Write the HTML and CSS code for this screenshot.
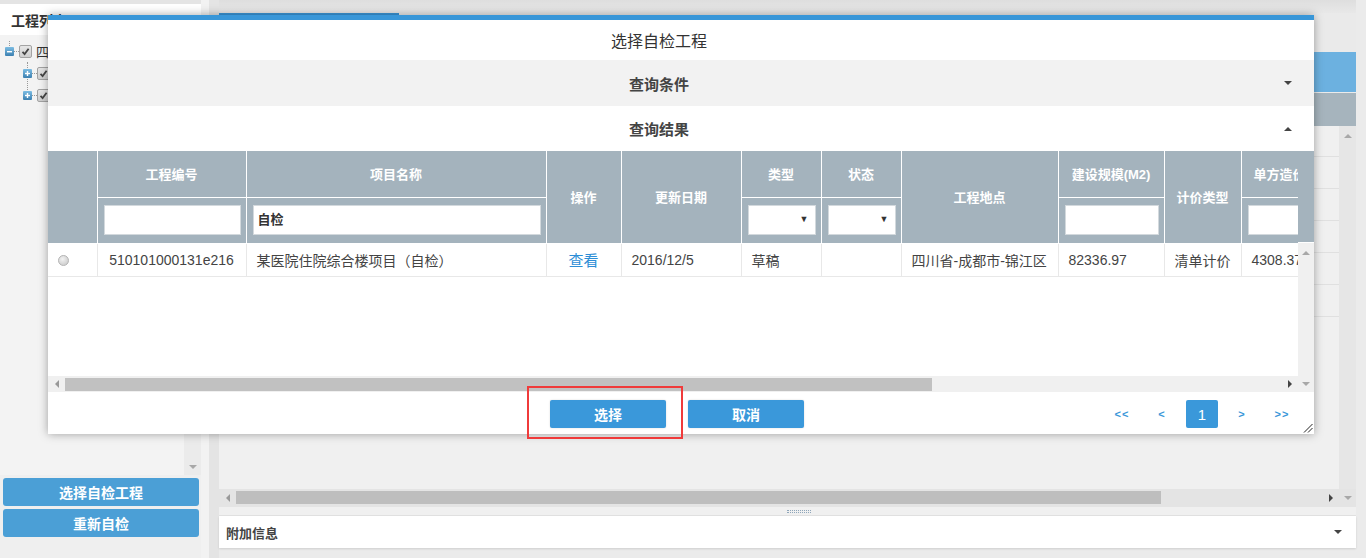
FILE: index.html
```html
<!DOCTYPE html>
<html lang="zh-CN">
<head>
<meta charset="utf-8">
<title>选择自检工程</title>
<link rel="stylesheet" href="styles.css">
</head>
<body>
<div class="page">
  <aside class="left">
    <div class="l-top"></div>
    <div class="l-head">工程列表</div>
    <div class="l-tree">
      <div class="tree">
        <div class="node root">
          <svg class="tog" width="9" height="9" viewBox="0 0 9 9"><defs><linearGradient id="tg" x1="0" y1="0" x2="0" y2="1"><stop offset="0" stop-color="#7dbde3"/><stop offset="1" stop-color="#3b7fb0"/></linearGradient></defs><rect width="9" height="9" rx="1" fill="url(#tg)"/><rect x="2" y="4" width="5" height="1.4" fill="#fff"/></svg>
          <span class="cb"><svg width="11" height="11" viewBox="0 0 11 11"><path d="M2.5 5.8 L4.6 8 L8.6 2.8" fill="none" stroke="#444" stroke-width="1.8"/></svg></span>
          <span class="nt">四川省成都市</span>
        </div>
        <div class="children">
          <div class="node">
            <svg class="tog" width="9" height="9" viewBox="0 0 9 9"><rect width="9" height="9" rx="1" fill="url(#tg)"/><rect x="2" y="3.8" width="5" height="1.4" fill="#fff"/><rect x="3.8" y="2" width="1.4" height="5" fill="#fff"/></svg>
            <span class="cb"><svg width="11" height="11" viewBox="0 0 11 11"><path d="M2.5 5.8 L4.6 8 L8.6 2.8" fill="none" stroke="#444" stroke-width="1.8"/></svg></span>
            <span class="nt">某医院住院综合楼</span>
          </div>
          <div class="node">
            <svg class="tog" width="9" height="9" viewBox="0 0 9 9"><rect width="9" height="9" rx="1" fill="url(#tg)"/><rect x="2" y="3.8" width="5" height="1.4" fill="#fff"/><rect x="3.8" y="2" width="1.4" height="5" fill="#fff"/></svg>
            <span class="cb"><svg width="11" height="11" viewBox="0 0 11 11"><path d="M2.5 5.8 L4.6 8 L8.6 2.8" fill="none" stroke="#444" stroke-width="1.8"/></svg></span>
            <span class="nt">某办公楼</span>
          </div>
        </div>
      </div>
      <div class="l-vs"><span class="tri-down grey"></span></div>
    </div>
    <div class="l-btns">
      <button class="lbtn">选择自检工程</button>
      <button class="lbtn">重新自检</button>
    </div>
  </aside>
  <div class="sep"></div>
  <main class="main">
    <div class="m-top"></div>
    <div class="m-tabs"><div class="m-tab"></div></div>
    <div class="m-toolbar"></div>
    <div class="m-thead"></div>
    <div class="m-body">
      <div class="m-rows">
        <div class="m-row"></div><div class="m-row"></div><div class="m-row"></div>
        <div class="m-row"></div><div class="m-row"></div><div class="m-row"></div>
      </div>
      <div class="m-vs"><span class="tri-up grey"></span></div>
    </div>
    <div class="m-hs">
      <div class="hs-btn"><span class="tri-left grey"></span></div>
      <div class="hs-track"><div class="hs-thumb"></div></div>
      <div class="hs-btn"><span class="tri-right"></span></div>
      <div class="hs-corner"><span class="tri-down grey"></span></div>
    </div>
    <div class="m-split"><span class="grip"></span></div>
    <div class="m-extra"><span>附加信息</span><span class="tri-down dark"></span></div>
  </main>
</div>

<div class="dialog">
  <div class="d-title">选择自检工程</div>
  <div class="d-sec cond">查询条件<span class="tri-down dark sec-arrow"></span></div>
  <div class="d-sec res">查询结果<span class="tri-up dark sec-arrow"></span></div>
  <div class="d-grid">
    <div class="g-main">
      <div class="g-view">
        <table class="grid">
          <colgroup>
            <col class="w49"><col class="w149"><col class="w300"><col class="w75"><col class="w120"><col class="w80"><col class="w80"><col class="w157"><col class="w106"><col class="w77"><col class="w120">
          </colgroup>
          <thead>
            <tr class="h1">
              <th rowspan="2" class="first"></th>
              <th>工程编号</th>
              <th>项目名称</th>
              <th rowspan="2">操作</th>
              <th rowspan="2">更新日期</th>
              <th>类型</th>
              <th>状态</th>
              <th rowspan="2">工程地点</th>
              <th>建设规模(M2)</th>
              <th rowspan="2">计价类型</th>
              <th>单方造价(元/M2)</th>
            </tr>
            <tr class="h2">
              <th><div class="fi"></div></th>
              <th><div class="fi">自检</div></th>
              <th><div class="fs"><span class="sel-arrow">▼</span></div></th>
              <th><div class="fs"><span class="sel-arrow">▼</span></div></th>
              <th><div class="fi"></div></th>
              <th><div class="fi"></div></th>
            </tr>
          </thead>
          <tbody>
            <tr class="row">
              <td class="first center"><span class="radio"></span></td>
              <td class="center">510101000131e216</td>
              <td>某医院住院综合楼项目（自检）</td>
              <td class="center"><span class="link">查看</span></td>
              <td>2016/12/5</td>
              <td>草稿</td>
              <td></td>
              <td>四川省-成都市-锦江区</td>
              <td>82336.97</td>
              <td>清单计价</td>
              <td>4308.37</td>
            </tr>
          </tbody>
        </table>
      </div>
      <div class="g-hs">
        <div class="ghs-btn"><span class="tri-left grey"></span></div>
        <div class="ghs-track"><div class="ghs-thumb"></div></div>
        <div class="ghs-btn"><span class="tri-right"></span></div>
      </div>
    </div>
    <div class="g-vs">
      <div class="g-vs-top"></div>
      <div class="g-vs-track">
        <span class="tri-up grey"></span>
        <span class="tri-down grey"></span>
      </div>
    </div>
  </div>
  <div class="d-foot">
    <div class="btns">
      <button class="dbtn">选择</button>
      <button class="dbtn">取消</button>
    </div>
    <div class="pager">
      <span class="pg">&lt;&lt;</span>
      <span class="pg">&lt;</span>
      <span class="pg cur">1</span>
      <span class="pg">&gt;</span>
      <span class="pg">&gt;&gt;</span>
    </div>
  </div>
  <svg class="resize" width="10" height="9" viewBox="0 0 10 9"><path d="M1 8.5 L9.5 0 M5 8.5 L9.5 4" stroke="#222" stroke-width="1"/></svg>
</div>
<div class="highlight"></div>
</body>
</html>
```

FILE: styles.css
```css
* { box-sizing: border-box; margin: 0; padding: 0; }
html, body { width: 1366px; height: 558px; overflow: hidden; }
body {
  position: relative;
  background: #ebebeb;
  font-family: "Liberation Sans", "Noto Sans CJK SC", sans-serif;
  font-size: 13px;
  color: #444;
}
button { font-family: "Liberation Sans", "Noto Sans CJK SC", sans-serif; cursor: pointer; }

/* triangles */
.tri-down, .tri-up, .tri-left, .tri-right { display: inline-block; width: 0; height: 0; }
.tri-down { border-left: 4px solid transparent; border-right: 4px solid transparent; border-top: 4px solid #555; }
.tri-up { border-left: 4px solid transparent; border-right: 4px solid transparent; border-bottom: 4px solid #555; }
.tri-left { border-top: 4px solid transparent; border-bottom: 4px solid transparent; border-right: 4px solid #999; }
.tri-right { border-top: 4px solid transparent; border-bottom: 4px solid transparent; border-left: 4px solid #444; }
.tri-down.grey { border-top-color: #a8a8a8; }
.tri-up.grey { border-bottom-color: #a8a8a8; }
.tri-down.dark { border-top-color: #444; }
.tri-up.dark { border-bottom-color: #444; }

.page { display: flex; height: 558px; }

/* left panel */
.left { width: 201px; display: flex; flex-direction: column; background: #efefef; }
.l-top { height: 4px; background: #e4e4e4; }
.l-head {
  height: 31px; background: #fff; padding: 3px 0 0 11px;
  font-size: 14px; font-weight: bold; line-height: 28px; color: #333;
}
.l-tree { height: 440px; display: flex; background: #f3f3f3; }
.tree { flex: 1; padding-top: 5px; }
.node { height: 22px; display: flex; align-items: center; position: relative; padding-left: 5px; }
.node .tog { flex: none; }
.node .cb {
  margin-left: 5px; width: 13px; height: 13px; flex: none;
  background: linear-gradient(#e6e6e6, #cfcfcf); border: 1px solid #a3a3a3; border-radius: 2px;
  display: flex; align-items: center; justify-content: center;
}
.node .nt { margin-left: 4px; font-size: 13px; color: #333; white-space: nowrap; }
.node::after {
  content: ""; position: absolute; left: 14px; top: 11px; width: 5px; border-top: 1px dotted #999;
}
.root::before {
  content: ""; position: absolute; left: 9px; top: 1px; height: 5px; border-left: 1px dotted #999;
}
.children { position: relative; padding-left: 18px; }
.children::before {
  content: ""; position: absolute; left: 27px; top: 0; height: 34px; border-left: 1px dotted #999;
}
.l-vs {
  width: 17px; background: #ebebeb; display: flex; flex-direction: column;
  justify-content: flex-end; align-items: center; padding-bottom: 6px;
}
.l-btns { padding: 3px 2px 0 3px; display: flex; flex-direction: column; gap: 3px; }
.lbtn {
  height: 28px; border: 0; border-radius: 3px; background: #4b9fd6;
  color: #fff; font-size: 14px; font-weight: bold;
}

.sep { width: 18px; background: linear-gradient(to right, #f2f2f2 0, #f2f2f2 8px, #e4e4e4 8px); }

/* main background area */
.main { width: 1137px; display: flex; flex-direction: column; }
.m-top { height: 13px; background: linear-gradient(#dedede, #e8e8e8); }
.m-tabs { height: 39px; background: #eaeaea; border-radius: 3px 3px 0 0; }
.m-tab { width: 180px; height: 39px; background: #fff; border-top: 2px solid #3a96d8; }
.m-toolbar { height: 40px; background: #6cb1e0; }
.m-thead { height: 33px; margin-top: 1px; background: #a6b4bd; }
.m-body { height: 363px; display: flex; background: #f0f0f0; }
.m-rows { flex: 1; }
.m-row { height: 32px; border-bottom: 1px solid #e0e0e0; }
.m-row:first-child { height: 31px; }
.m-vs { width: 17px; background: #e6e6e6; display: flex; justify-content: center; padding-top: 8px; }
.m-hs { height: 18px; display: flex; background: #e4e4e4; }
.hs-btn, .hs-corner { width: 17px; display: flex; align-items: center; justify-content: center; }
.hs-corner { background: #e4e4e4; }
.hs-track { flex: 1; padding-top: 2px; }
.hs-thumb { width: 925px; height: 13px; background: #bebebe; }
.m-split { height: 9px; background: #f0f0f0; display: flex; justify-content: center; align-items: center; border-bottom: 1px solid #e2e2e2; }
.grip { width: 24px; height: 3px; margin-left: 23px; border-top: 1px dotted #8fa6ba; border-bottom: 1px dotted #8fa6ba; }
.m-extra {
  height: 32px; background: #fff; width: 1137px;
  display: flex; align-items: center; justify-content: space-between;
  padding: 0 14px 0 7px; box-shadow: 0 1px 2px rgba(0,0,0,.12);
  font-size: 13px; font-weight: bold; color: #444;
}

/* dialog */
.dialog {
  position: absolute; left: 48px; top: 15px; width: 1266px; height: 419px;
  background: #fff; border-top: 5px solid #3896d8;
  box-shadow: 0 0 9px rgba(0,0,0,.35);
  display: flex; flex-direction: column;
}
.d-title {
  height: 40px; display: flex; align-items: center; justify-content: center;
  padding-right: 44px; font-size: 16px; color: #333;
}
.d-sec {
  height: 46px; position: relative; display: flex; align-items: center; justify-content: center;
  padding-right: 44px; font-size: 15px; font-weight: bold; color: #444;
}
.d-sec.cond { background: #f2f2f2; }
.d-sec.res { height: 45px; }
.sec-arrow { position: absolute; right: 22px; top: 21px; }
.d-grid { height: 241px; display: flex; }
.g-main { width: 1250px; display: flex; flex-direction: column; }
.g-view { height: 225px; overflow: hidden; background: #fff; }
.grid { table-layout: fixed; width: 1313px; border-collapse: collapse; }
.w49 { width: 49px; } .w149 { width: 149px; } .w300 { width: 300px; } .w75 { width: 75px; }
.w120 { width: 120px; } .w80 { width: 80px; } .w157 { width: 157px; } .w106 { width: 106px; } .w77 { width: 77px; }
.grid th {
  background: #a4b3bd; color: #fff; font-size: 13px; font-weight: bold;
  border-left: 1px solid #fff; border-bottom: 1px solid #fff;
  white-space: nowrap; overflow: hidden; text-align: center; padding: 0;
}
.grid th.first, .grid td.first { border-left: 0; }
.grid tr.h1 { height: 46px; }
.grid tr.h2 { height: 46px; }
.grid tr.h2 th { padding: 0 5px 0 6px; }
.fi {
  height: 30px; background: #fff; border: 1px solid #d3d9dd;
  color: #333; font-size: 13px; font-weight: bold; text-align: left;
  line-height: 28px; padding-left: 4px;
}
.fs {
  height: 30px; background: #fff; border: 1px solid #d3d9dd; position: relative;
}
.sel-arrow { position: absolute; right: 6px; top: 8px; font-size: 9px; color: #333; font-weight: normal; }
.grid td {
  height: 33px; padding: 0 10px; font-size: 14px; color: #444; white-space: nowrap; overflow: hidden;
  border-left: 1px solid #e8e8e8; border-bottom: 1px solid #e8e8e8;
}
.grid td.center { text-align: center; padding: 0; }
.radio {
  display: inline-block; width: 11px; height: 11px; border-radius: 50%;
  background: radial-gradient(circle at 40% 35%, #f2f2f2, #c4c4c4); border: 1px solid #b5b5b5;
  vertical-align: middle; margin-left: -17px;
}
.link { color: #2d8ed6; font-size: 15px; }
.g-hs { height: 16px; display: flex; background: #f0f0f0; }
.ghs-btn { width: 17px; display: flex; align-items: center; justify-content: center; }
.ghs-track { flex: 1; padding-top: 2px; }
.ghs-thumb { width: 867px; height: 13px; background: #c1c1c1; }
.g-vs { width: 16px; display: flex; flex-direction: column; }
.g-vs-top { height: 92px; background: #a4b3bd; border-bottom: 1px solid #fff; }
.g-vs-track {
  flex: 1; background: #f0f0f0; display: flex; flex-direction: column;
  align-items: center; justify-content: space-between; padding: 8px 0 6px;
}
.d-foot { flex: 1; display: flex; align-items: flex-start; padding-top: 8px; }
.btns { display: flex; gap: 22px; margin-left: 502px; }
.dbtn {
  width: 116px; height: 28px; border: 0; border-radius: 2px; background: #3a98da;
  color: #fff; font-size: 14px; font-weight: bold; box-shadow: 0 0 2px rgba(0,0,0,.15);
}
.pager { display: flex; gap: 8px; margin-left: auto; margin-right: 16px; }
.pg {
  width: 32px; height: 28px; display: flex; align-items: center; justify-content: center;
  color: #3a97d9; font-size: 11px; font-weight: bold; letter-spacing: 1px;
}
.pg.cur { background: #3a98da; color: #fff; font-size: 15px; font-weight: normal; border-radius: 2px; letter-spacing: 0; }
.resize { position: absolute; right: 1px; bottom: 1px; }

.highlight {
  position: absolute; left: 527px; top: 386px; width: 156px; height: 53px;
  border: 2px solid #f03b3b;
}
```
